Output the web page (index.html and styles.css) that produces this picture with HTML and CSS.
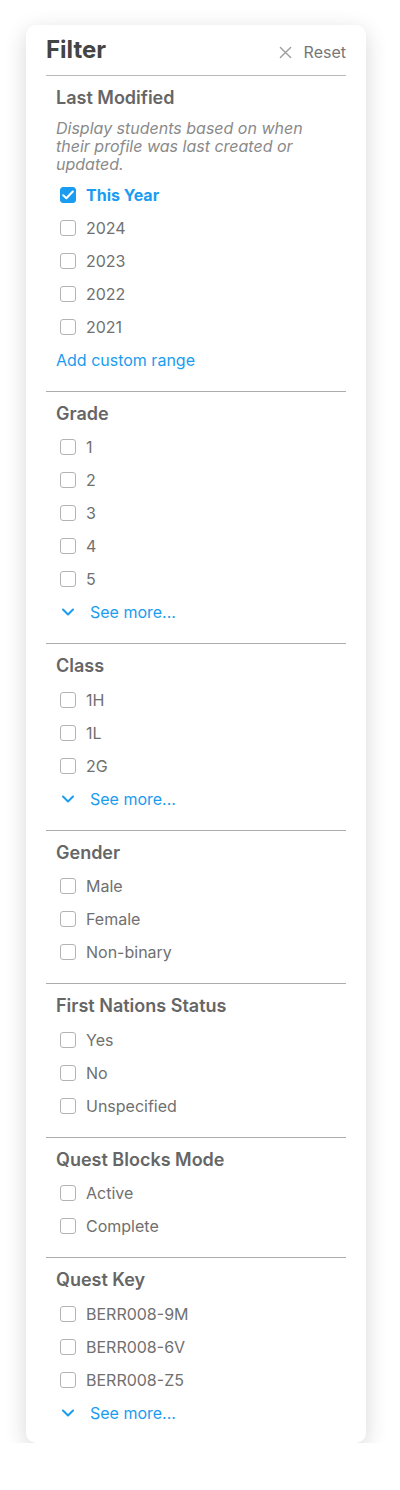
FILE: index.html
```html
<!DOCTYPE html>
<html lang="en">
<head>
<meta charset="utf-8">
<title>Filter</title>
<link rel="stylesheet" href="styles.css">
</head>
<body>
<div class="card">
  <div class="header">
    <h1 class="title">Filter</h1>
    <button class="reset">
      <svg class="x-icon" width="14" height="14" viewBox="0 0 14 14"><path d="M1.5 1.5 L12.5 12.5 M12.5 1.5 L1.5 12.5" stroke="#9e9e9e" stroke-width="1.5" fill="none" stroke-linecap="round"/></svg>
      <span>Reset</span>
    </button>
  </div>

  <section class="section">
    <h2 class="sec-title">Last Modified</h2>
    <p class="desc">Display students based on when their profile was last created or updated.</p>
    <label class="row checked"><span class="box"><svg width="12" height="10" viewBox="0 0 12 10"><path d="M1.2 5.2 L4.4 8.3 L10.8 1.5" stroke="#fff" stroke-width="2" fill="none" stroke-linecap="round" stroke-linejoin="round"/></svg></span><span class="lbl">This Year</span></label>
    <label class="row"><span class="box"></span><span class="lbl">2024</span></label>
    <label class="row"><span class="box"></span><span class="lbl">2023</span></label>
    <label class="row"><span class="box"></span><span class="lbl">2022</span></label>
    <label class="row"><span class="box"></span><span class="lbl">2021</span></label>
    <a class="link-row">Add custom range</a>
  </section>

  <section class="section">
    <h2 class="sec-title">Grade</h2>
    <label class="row"><span class="box"></span><span class="lbl">1</span></label>
    <label class="row"><span class="box"></span><span class="lbl">2</span></label>
    <label class="row"><span class="box"></span><span class="lbl">3</span></label>
    <label class="row"><span class="box"></span><span class="lbl">4</span></label>
    <label class="row"><span class="box"></span><span class="lbl">5</span></label>
    <a class="more-row"><svg class="chev" width="14" height="8" viewBox="0 0 14 8"><path d="M2 1.5 L7 6.5 L12 1.5" stroke="#1a9cf0" stroke-width="2" fill="none" stroke-linecap="round" stroke-linejoin="round"/></svg><span>See more...</span></a>
  </section>

  <section class="section">
    <h2 class="sec-title">Class</h2>
    <label class="row"><span class="box"></span><span class="lbl">1H</span></label>
    <label class="row"><span class="box"></span><span class="lbl">1L</span></label>
    <label class="row"><span class="box"></span><span class="lbl">2G</span></label>
    <a class="more-row"><svg class="chev" width="14" height="8" viewBox="0 0 14 8"><path d="M2 1.5 L7 6.5 L12 1.5" stroke="#1a9cf0" stroke-width="2" fill="none" stroke-linecap="round" stroke-linejoin="round"/></svg><span>See more...</span></a>
  </section>

  <section class="section">
    <h2 class="sec-title">Gender</h2>
    <label class="row"><span class="box"></span><span class="lbl">Male</span></label>
    <label class="row"><span class="box"></span><span class="lbl">Female</span></label>
    <label class="row"><span class="box"></span><span class="lbl">Non-binary</span></label>
  </section>

  <section class="section">
    <h2 class="sec-title">First Nations Status</h2>
    <label class="row"><span class="box"></span><span class="lbl">Yes</span></label>
    <label class="row"><span class="box"></span><span class="lbl">No</span></label>
    <label class="row"><span class="box"></span><span class="lbl">Unspecified</span></label>
  </section>

  <section class="section">
    <h2 class="sec-title">Quest Blocks Mode</h2>
    <label class="row"><span class="box"></span><span class="lbl">Active</span></label>
    <label class="row"><span class="box"></span><span class="lbl">Complete</span></label>
  </section>

  <section class="section last">
    <h2 class="sec-title">Quest Key</h2>
    <label class="row"><span class="box"></span><span class="lbl">BERR008-9M</span></label>
    <label class="row"><span class="box"></span><span class="lbl">BERR008-6V</span></label>
    <label class="row"><span class="box"></span><span class="lbl">BERR008-Z5</span></label>
    <a class="more-row"><svg class="chev" width="14" height="8" viewBox="0 0 14 8"><path d="M2 1.5 L7 6.5 L12 1.5" stroke="#1a9cf0" stroke-width="2" fill="none" stroke-linecap="round" stroke-linejoin="round"/></svg><span>See more...</span></a>
  </section>
</div>
</body>
</html>
```

FILE: styles.css
```css
* { box-sizing: border-box; }

body {
  margin: 0;
  background: #ffffff;
  font-family: Inter, "Noto Sans", "Liberation Sans", sans-serif;
  color: #666666;
}

.card {
  margin: 25px 0 0 26px;
  width: 340px;
  background: #ffffff;
  border-radius: 10px;
  box-shadow: 0 6px 22px rgba(0, 0, 0, 0.16);
  padding: 0 20px;
}

.header {
  height: 51px;
  display: flex;
  align-items: center;
  justify-content: space-between;
  border-bottom: 1.5px solid #b8b8b8;
}

.title {
  margin: 0;
  font-size: 24px;
  font-weight: 700;
  color: #444444;
  line-height: 28px;
}

.reset {
  display: flex;
  align-items: center;
  gap: 12px;
  border: 0;
  background: none;
  padding: 0;
  margin-top: 4px;
  font-family: inherit;
  font-size: 16px;
  color: #777777;
}

.x-icon { width: 13px; height: 13px; }

.section {
  padding: 10px 0 14.5px 10px;
  border-bottom: 1px solid #acacac;
}

.section.last {
  border-bottom: 0;
  padding-bottom: 13.5px;
}

.sec-title {
  margin: 0 0 5px;
  font-size: 18px;
  font-weight: 600;
  line-height: 24px;
  color: #666666;
}

.desc {
  margin: 9px 0 5px;
  max-width: 262px;
  font-size: 16px;
  line-height: 18px;
  font-style: italic;
  color: #8a8a8a;
}

.row {
  display: flex;
  align-items: center;
  gap: 10px;
  height: 33px;
  padding-left: 4px;
  font-size: 16px;
  color: #707070;
}

.box {
  width: 16px;
  height: 16px;
  border: 1.5px solid #b3b3b3;
  border-radius: 3px;
  display: flex;
  align-items: center;
  justify-content: center;
  flex: none;
}

.row.checked .box {
  background: #1a9cf0;
  border-color: #1a9cf0;
}

.row.checked .lbl {
  color: #1a9cf0;
  font-weight: 700;
}

.link-row {
  display: flex;
  align-items: center;
  height: 33px;
  font-size: 16px;
  color: #1a9cf0;
}

.more-row {
  display: flex;
  align-items: center;
  gap: 15px;
  height: 33px;
  padding-left: 5px;
  font-size: 16px;
  color: #1a9cf0;
}

.chev { flex: none; }
```
